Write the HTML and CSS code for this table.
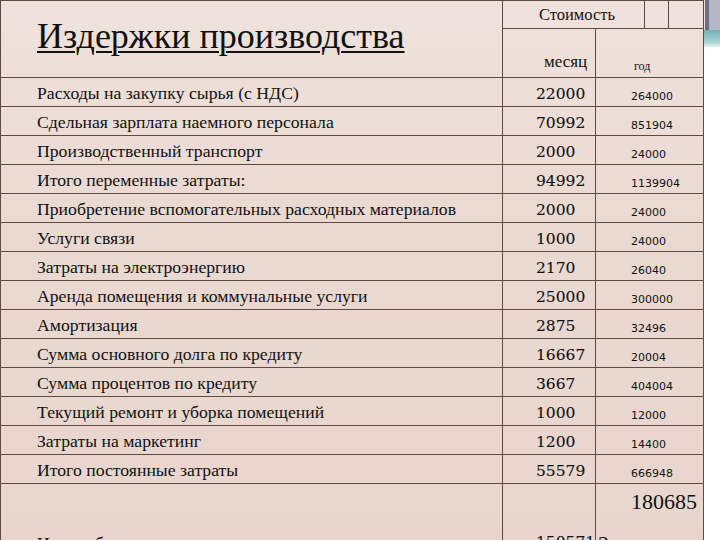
FILE: index.html
```html
<!DOCTYPE html>
<html lang="ru">
<head>
<meta charset="utf-8">
<title>Издержки производства</title>
<link rel="stylesheet" href="styles.css">
</head>
<body>
<div class="page">
  <table class="costs">
    <colgroup>
      <col class="c-name"><col class="c-month"><col class="c-ya"><col class="c-yb"><col class="c-yc">
    </colgroup>
    <tr class="h1">
      <td class="title-cell" rowspan="2"><span class="title">Издержки производства</span></td>
      <td class="cost-head" colspan="2">Стоимость</td>
      <td></td>
      <td></td>
    </tr>
    <tr class="h2">
      <td class="month-head">месяц</td>
      <td class="year-head" colspan="3">год</td>
    </tr>
    <tr><td class="name">Расходы на закупку сырья (с НДС)</td><td class="m">22000</td><td class="y" colspan="3">264000</td></tr>
    <tr><td class="name">Сдельная зарплата наемного персонала</td><td class="m">70992</td><td class="y" colspan="3">851904</td></tr>
    <tr><td class="name">Производственный транспорт</td><td class="m">2000</td><td class="y" colspan="3">24000</td></tr>
    <tr><td class="name">Итого переменные затраты:</td><td class="m">94992</td><td class="y" colspan="3">1139904</td></tr>
    <tr><td class="name">Приобретение вспомогательных расходных материалов</td><td class="m">2000</td><td class="y" colspan="3">24000</td></tr>
    <tr><td class="name">Услуги связи</td><td class="m">1000</td><td class="y" colspan="3">24000</td></tr>
    <tr><td class="name">Затраты на электроэнергию</td><td class="m">2170</td><td class="y" colspan="3">26040</td></tr>
    <tr><td class="name">Аренда помещения и коммунальные услуги</td><td class="m">25000</td><td class="y" colspan="3">300000</td></tr>
    <tr><td class="name">Амортизация</td><td class="m">2875</td><td class="y" colspan="3">32496</td></tr>
    <tr><td class="name">Сумма основного долга по кредиту</td><td class="m">16667</td><td class="y" colspan="3">20004</td></tr>
    <tr><td class="name">Сумма процентов по кредиту</td><td class="m">3667</td><td class="y" colspan="3">404004</td></tr>
    <tr><td class="name">Текущий ремонт и уборка помещений</td><td class="m">1000</td><td class="y" colspan="3">12000</td></tr>
    <tr><td class="name">Затраты на маркетинг</td><td class="m">1200</td><td class="y" colspan="3">14400</td></tr>
    <tr><td class="name">Итого постоянные затраты</td><td class="m">55579</td><td class="y" colspan="3">666948</td></tr>
    <tr class="total">
      <td class="name total-name">Итого общие издержки:</td>
      <td class="m total-m">150571</td>
      <td class="total-y" colspan="3">
        <div class="ty-main">180685</div>
        <div class="ty-tail">2</div>
      </td>
    </tr>
  </table>
  <div class="corner">
    <div class="corner-grey"></div>
    <div class="corner-teal"></div>
  </div>
</div>
</body>
</html>
```

FILE: styles.css
```css
html, body {
  margin: 0;
  padding: 0;
  width: 720px;
  height: 540px;
  overflow: hidden;
  background: #ffffff;
}

.page {
  display: flex;
  align-items: flex-start;
  width: 720px;
  height: 540px;
}

.costs {
  border-collapse: collapse;
  table-layout: fixed;
  width: 703px;
  flex: none;
  background: linear-gradient(180deg, #efe2dc 0%, #ead9d1 40%, #e8d6ce 100%);
  font-family: "Liberation Serif", "Times New Roman", serif;
  color: #111;
}

.c-name { width: 502px; }
.c-month { width: 93px; }
.c-ya { width: 49px; }
.c-yb { width: 24px; }
.c-yc { width: 35px; }

.costs td {
  border: 1px solid #5f4b42;
  padding: 0;
  white-space: nowrap;
  overflow: visible;
}

.costs tr { height: 29px; }
.costs tr.h1 { height: 28px; }
.costs tr.h2 { height: 49px; }
.costs tr.total { height: 80px; }

.title-cell {
  vertical-align: top;
  padding: 14px 0 0 36px !important;
}

.title {
  font-size: 36px;
  text-decoration: underline;
  text-decoration-thickness: 2px;
  text-underline-offset: 3px;
}

.cost-head {
  font-size: 16.5px;
  padding-left: 36px !important;
  vertical-align: middle;
}

.month-head {
  font-size: 17px;
  vertical-align: bottom;
  padding: 0 0 5px 41px !important;
}

.year-head {
  font-size: 12px;
  vertical-align: bottom;
  padding: 0 0 3px 38px !important;
}

.name {
  font-size: 17.7px;
  padding: 2px 0 0 36px !important;
  vertical-align: middle;
}

.m {
  font-family: "DejaVu Serif", serif;
  font-size: 15.5px;
  padding: 3px 0 0 33px !important;
  vertical-align: middle;
  -webkit-text-stroke: 0.12px #111;
}

.y {
  font-family: "DejaVu Sans", sans-serif;
  font-size: 11px;
  padding: 0 0 3px 35px !important;
  vertical-align: bottom;
}

.total td { vertical-align: top; }

.total-name { padding-top: 49px !important; }
.total-m { padding-top: 49px !important; }

.total-y {
  font-family: "Liberation Serif", serif;
  font-size: 22px;
}

.ty-main {
  text-align: right;
  padding: 5px 6px 0 0;
}

.ty-tail {
  padding: 16px 0 0 2px;
}

.corner {
  flex: none;
  width: 17px;
  display: flex;
  flex-direction: column;
}

.corner-grey {
  height: 30px;
  background: linear-gradient(90deg, #ecdcd4 0 1px, #6e6e84 1px 5px, #b6b6c6 5px 100%);
}

.corner-teal {
  height: 17px;
  background: linear-gradient(180deg, #6fb2b8 0%, #a9d2d4 70%, #e6f1f1 100%);
}
```
